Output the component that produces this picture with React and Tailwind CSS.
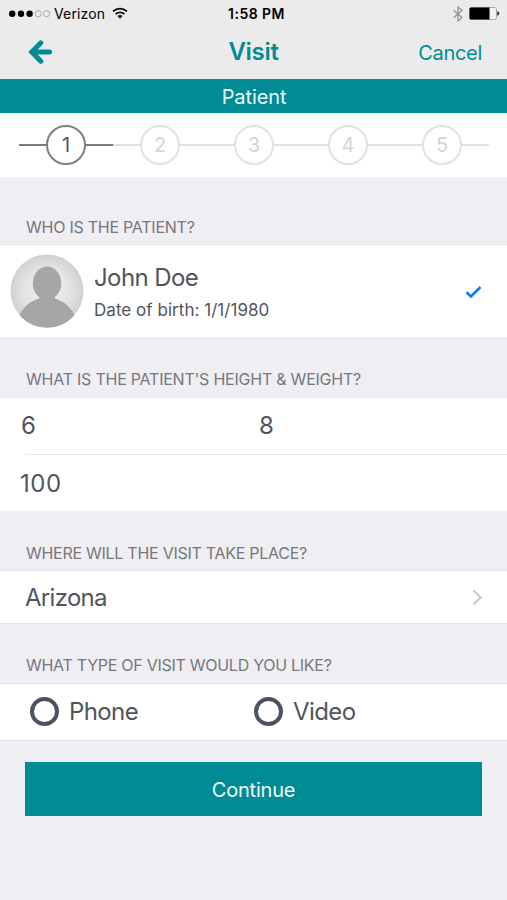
const steps = [1, 2, 3, 4, 5];

function StatusBar() {
  return (
    <div className="flex h-7 items-center pl-[9px] pr-[7px] text-black">
      <div className="flex flex-1 items-center">
        <svg width="42" height="8" viewBox="0 0 42 8">
          <g fill="#000">
            <circle cx="3.2" cy="3.7" r="3.2" />
            <circle cx="12" cy="3.7" r="3.2" />
            <circle cx="20.6" cy="3.7" r="3.2" />
          </g>
          <g fill="none" stroke="#a3a3a3" strokeWidth="0.9">
            <circle cx="29.2" cy="3.7" r="3.1" />
            <circle cx="37.6" cy="3.7" r="3.1" />
          </g>
        </svg>
        <span className="ml-[3px] text-[14px] leading-7 tracking-[0.15px]">Verizon</span>
        <svg className="-mt-[3px] ml-[7px]" width="16" height="12" viewBox="0 0 16 12" fill="none" stroke="#111" strokeWidth="1.8">
          <path d="M1 4.4a10.2 10.2 0 0 1 14 0" />
          <path d="M3.6 7.2a6.3 6.3 0 0 1 8.8 0" />
          <path d="M8 11.8 5.4 9.1a3.8 3.8 0 0 1 5.2 0z" fill="#111" stroke="none" />
        </svg>
      </div>
      <span className="ml-1 text-[14px] font-semibold leading-7 tracking-[0.45px]">1:58 PM</span>
      <div className="flex flex-1 items-center justify-end">
        <svg className="-mt-px" width="10" height="16" viewBox="0 0 10 16" fill="none" stroke="#949494" strokeWidth="1.3">
          <path d="M.8 4.4 9 11.4 5 15V1l4 3.6L.8 11.6" />
        </svg>
        <svg className="-mt-px ml-[6px]" width="31" height="13" viewBox="0 0 31 13">
          <rect x="0.5" y="0.5" width="27" height="12" rx="1.8" fill="#f4f4f4" stroke="#999" strokeWidth="0.8" />
          <path d="M2 .5H20.5V12.5H2A1.5 1.5 0 0 1 .5 11V2A1.5 1.5 0 0 1 2 .5z" fill="#000" />
          <path d="M28.3 4.3c2.6.7 2.6 3.7 0 4.4z" fill="#222" />
        </svg>
      </div>
    </div>
  );
}

function NavBar() {
  return (
    <div className="flex h-[51px] items-center px-[25px] pb-[3px] text-[#008b95]">
      <div className="flex flex-1 items-center pl-[3px]">
        <svg className="-mt-px" width="24" height="24" viewBox="0 0 24 24" fill="none" stroke="currentColor" strokeWidth="5">
          <path d="M12.8 2.8 3.8 12l9 9.2" strokeLinecap="round" strokeLinejoin="miter" />
          <path d="M4.5 12h17" strokeLinecap="round" />
        </svg>
      </div>
      <h1 className="mr-[3px] text-[24px] font-semibold leading-8 tracking-[-0.3px]">Visit</h1>
      <div className="flex flex-1 justify-end">
        <button className="pt-px text-[20px] leading-8 tracking-[-0.3px]">Cancel</button>
      </div>
    </div>
  );
}

function Stepper() {
  return (
    <div className="flex h-16 items-center bg-white pl-[19px] pr-[18px]">
      {steps.map((n) => {
        const active = n === 1;
        const line = active ? "h-[2px] flex-1 bg-[#777b7d]" : "h-[2px] flex-1 bg-[#dfe1e2]";
        return (
          <div key={n} className="flex flex-1 items-center">
            <div className={line} />
            <div
              className={
                active
                  ? "flex size-10 items-center justify-center rounded-full border-2 border-[#7d8184] text-[20px] text-[#50565a]"
                  : "flex size-10 items-center justify-center rounded-full border-2 border-[#dfe1e2] text-[20px] text-[#d2d4d5]"
              }
            >
              {n}
            </div>
            <div className={line} />
          </div>
        );
      })}
    </div>
  );
}

function Avatar() {
  return (
    <svg className="-mt-px" width="74" height="74" viewBox="0 0 74 74">
      <defs>
        <radialGradient id="halo" cx="50%" cy="50%" r="52%">
          <stop offset="0" stopColor="#f0f0f0" />
          <stop offset="0.6" stopColor="#e4e4e4" />
          <stop offset="1" stopColor="#cfcfcf" />
        </radialGradient>
        <clipPath id="round">
          <circle cx="37" cy="37" r="36.7" />
        </clipPath>
      </defs>
      <g clipPath="url(#round)">
        <circle cx="37" cy="37" r="36.7" fill="url(#halo)" />
        <g fill="#a6a6a6">
          <ellipse cx="37" cy="29.2" rx="14.2" ry="16.6" />
          <circle cx="37" cy="74" r="30.5" />
          <path d="M30 41h14v2l2 3H28l2-3z" />
        </g>
      </g>
    </svg>
  );
}

function Radio({ label }) {
  return (
    <label className="flex items-center">
      <span className="-mt-px size-[29px] rounded-full border-4 border-[#4b5362]" />
      <span className="ml-[10px] text-[24px] leading-8 tracking-[-0.6px]">{label}</span>
    </label>
  );
}

export default function App() {
  return (
    <div className="flex h-[900px] w-[507px] flex-col overflow-hidden bg-[#eeeef3] font-['Inter','Liberation_Sans',sans-serif] text-[#50555c]">
      <header className="bg-[#ebebeb]">
        <StatusBar />
        <NavBar />
      </header>
      <div className="h-[34px] bg-[#008b95] pl-px pt-[2px] text-center text-[20px] leading-8 tracking-[-0.1px] text-[#e8fbfc]">Patient</div>
      <Stepper />

      <h2 className="h-[67px] pl-[26px] pt-[38px] text-[16px] leading-6 tracking-[-0.25px] text-[#77777c]">WHO IS THE PATIENT?</h2>
      <div className="flex h-[95px] items-center border-y border-[#e3e3e7] bg-white pl-[10px] pr-[25px]">
        <Avatar />
        <div className="ml-[10px] flex-1 pt-1">
          <div className="text-[24px] leading-8 tracking-[-0.6px]">John Doe</div>
          <div className="text-[17px] leading-8 tracking-[0.04px]">Date of birth: 1/1/1980</div>
        </div>
        <svg width="17" height="14" viewBox="0 0 17 14" fill="none" stroke="#0f7af5" strokeWidth="2.6">
          <path d="M1.5 7.2 6 11.5 15.5 2" />
        </svg>
      </div>

      <h2 className="h-[58px] pl-[26px] pt-[28px] text-[16px] leading-6 tracking-[-0.23px] text-[#77777c]">WHAT IS THE PATIENT'S HEIGHT &amp; WEIGHT?</h2>
      <div className="h-[114px] border-t border-[#e9e9ec] bg-white text-[24px]">
        <div className="grid h-[56px] grid-cols-[238px_1fr] items-center pl-[21px]">
          <span>6</span>
          <span>8</span>
        </div>
        <div className="ml-[25px] h-px bg-[#e8e8ea]" />
        <div className="flex h-[57px] items-center pl-[20px] tracking-[0.5px]">100</div>
      </div>

      <h2 className="h-[59px] pl-[26px] pt-[30px] text-[16px] leading-6 tracking-[-0.27px] text-[#77777c]">WHERE WILL THE VISIT TAKE PLACE?</h2>
      <div className="flex h-[54px] items-center justify-between border-y border-[#e3e3e7] bg-white pl-[25px] pr-[24px] text-[24px]">
        <span className="pt-px tracking-[-0.7px]">Arizona</span>
        <svg width="11" height="17" viewBox="0 0 11 17" fill="none" stroke="#c6c6ca" strokeWidth="2">
          <path d="M1.5 1.5 8.8 8.5 1.5 15.5" />
        </svg>
      </div>

      <h2 className="h-[59px] pl-[26px] pt-[29px] text-[16px] leading-6 tracking-[-0.27px] text-[#77777c]">WHAT TYPE OF VISIT WOULD YOU LIKE?</h2>
      <div className="grid h-[58px] grid-cols-[224px_1fr] items-center border-y border-[#e3e3e7] bg-white pl-[30px]">
        <Radio label="Phone" />
        <Radio label="Video" />
      </div>

      <button className="mx-[25px] mt-[21px] h-[54px] w-[457px] bg-[#008b95] pt-px text-[20px] tracking-[-0.2px] text-[#f0fdfd]">Continue</button>
    </div>
  );
}
